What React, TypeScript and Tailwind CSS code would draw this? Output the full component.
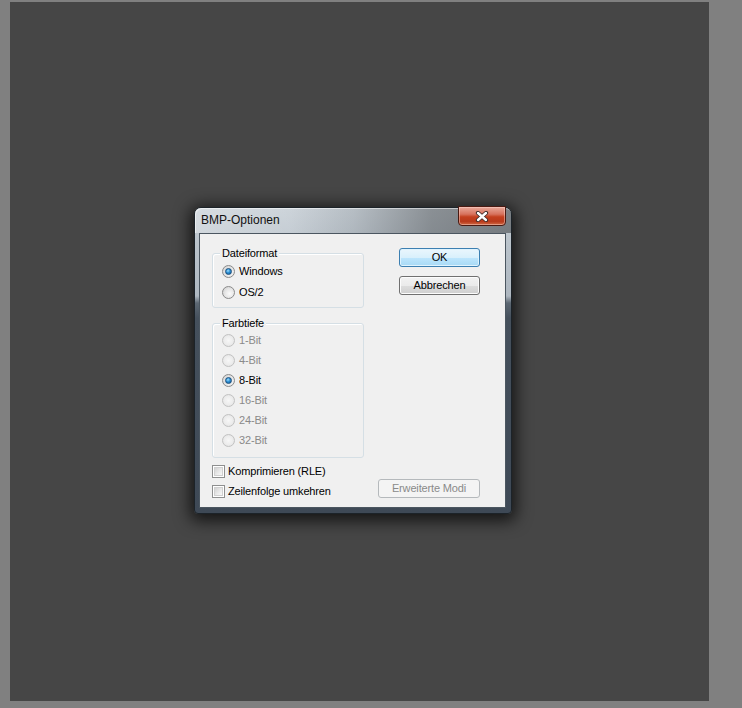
import React from "react";

function Radio({ label, checked = false, disabled = false, h = "h-[20px]" }: { label: string; checked?: boolean; disabled?: boolean; h?: string }) {
  return (
    <div className={`flex ${h} items-center gap-[4px]`}>
      <span
        className={`flex h-[13px] w-[13px] shrink-0 items-center justify-center rounded-full border ${
          disabled
            ? "border-[#c2c2c2] bg-[radial-gradient(circle_at_50%_50%,#f7f7f7_0%,#ececec_55%,#dcdcdc_100%)]"
            : "border-[#8b8b8b] bg-[radial-gradient(circle_at_60%_60%,#fbfbfb_0%,#e6e6e6_50%,#c9c9c9_100%)]"
        }`}
      >
        {checked && (
          <span className="h-[7px] w-[7px] rounded-full border border-[#1b4f7d] bg-[radial-gradient(circle_at_40%_35%,#9fe0ff_0%,#2b8ed3_45%,#0f5a96_100%)]" />
        )}
      </span>
      <span className={disabled ? "text-[#8a8a8a]" : "text-black"}>{label}</span>
    </div>
  );
}

function Check({ label }: { label: string }) {
  return (
    <div className="flex h-[20px] items-center gap-[3px]">
      <span className="flex h-[13px] w-[13px] shrink-0 items-center justify-center border border-[#8e8f8f] bg-white">
        <span className="h-[9px] w-[9px] border border-[#d0d0d0] bg-[linear-gradient(135deg,#d3d3d3_0%,#ebebeb_60%,#f8f8f8_100%)]" />
      </span>
      <span className="text-black">{label}</span>
    </div>
  );
}

function Btn({ label, def = false, disabled = false, w = "w-[81px]" }: { label: string; def?: boolean; disabled?: boolean; w?: string }) {
  const cls = disabled
    ? "border-[#b5b9bc] bg-[#f4f4f4] text-[#8a8a8a]"
    : def
    ? "border-[#3c7fb1] bg-[linear-gradient(to_bottom,#eaf6fd_0%,#d9f0fc_50%,#bee6fd_51%,#a7d9f5_100%)] text-black shadow-[inset_0_0_0_1px_#dff3fe]"
    : "border-[#707070] bg-[linear-gradient(to_bottom,#f2f2f2_0%,#ebebeb_50%,#dddddd_51%,#cfcfcf_100%)] text-black shadow-[inset_0_0_0_1px_#fcfcfc]";
  return (
    <div className={`flex h-[19px] ${w} items-center justify-center rounded-[3px] border ${cls}`}>
      {label}
    </div>
  );
}

function Group({ title, h, children, className = "" }: { title: string; h: string; children: React.ReactNode; className?: string }) {
  return (
    <div className={`relative w-[152px] ${h} rounded-[3px] border border-[#d5dfe5] shadow-[inset_1px_1px_0_#ffffff] pl-[9px] ${className}`}>
      <span className="absolute left-[7px] top-[-8px] bg-[#f0f0f0] px-[2px] leading-[14px] text-black">{title}</span>
      {children}
    </div>
  );
}

export default function App() {
  return (
    <div className="h-[708px] w-[742px] bg-[#808080] pl-[10px] pt-[2px] font-['Liberation_Sans',Tahoma,Arial,sans-serif] text-[11px] leading-[13px] tracking-[-0.15px]">
      <div className="h-[699px] w-[699px] bg-[#464646] pl-[184px] pt-[205px]">
        <div className="relative flex h-[307px] w-[318px] flex-col rounded-t-[7px] rounded-b-[4px] border border-[#1c2329] bg-[linear-gradient(to_bottom,#c6ced5_0px,#b9c2ca_40px,#aeb7c0_88px,#5d6873_95px,#45505c_110px,#3e4956_100%)] shadow-[0_3px_16px_4px_rgba(0,0,0,0.7)]">
          <div className="flex h-[25px] items-center rounded-t-[6px] bg-[linear-gradient(to_right,rgba(255,255,255,0.3)_0%,rgba(255,255,255,0.12)_30%,rgba(0,0,0,0.08)_50%,rgba(0,0,0,0.3)_75%,rgba(0,0,0,0.38)_100%)] pl-[6px] shadow-[inset_1px_1px_0_rgba(255,255,255,0.5)]">
            <span className="font-['Liberation_Sans',Arial,sans-serif] text-[12px] tracking-normal text-[#111]">BMP-Optionen</span>
          </div>
          <div className="absolute right-[5px] top-[-2px] flex h-[20px] w-[48px] items-center justify-center rounded-b-[4px] border border-[#4a1a12] bg-[linear-gradient(to_bottom,#e9a99a_0%,#d7725d_40%,#c4401f_55%,#b83a1c_80%,#d06a45_100%)] shadow-[inset_0_0_0_1px_rgba(255,220,210,0.45)]">
            <svg width="14" height="11" viewBox="0 0 14 11">
              <path d="M3 2 L11 9 M11 2 L3 9" stroke="#3b2a28" strokeWidth="4.2" strokeLinecap="round" fill="none" />
              <path d="M3 2 L11 9 M11 2 L3 9" stroke="#ffffff" strokeWidth="2.4" strokeLinecap="round" fill="none" />
            </svg>
          </div>
          <div className="ml-[4px] mr-[5px] flex h-[275px] flex-col border border-[#4b5660] bg-[#f0f0f0] pl-[12px] pt-[14px]">
            <div className="flex">
              <div className="mt-[5px] flex flex-col">
                <Group title="Dateiformat" h="h-[55px]" className="pt-[7px]">
                  <Radio label="Windows" checked h="h-[21px]" />
                  <Radio label="OS/2" h="h-[21px]" />
                </Group>
                <Group title="Farbtiefe" h="h-[135px]" className="mt-[15px] pt-[6px]">
                  <Radio label="1-Bit" disabled />
                  <Radio label="4-Bit" disabled />
                  <Radio label="8-Bit" checked />
                  <Radio label="16-Bit" disabled />
                  <Radio label="24-Bit" disabled />
                  <Radio label="32-Bit" disabled />
                </Group>
              </div>
              <div className="ml-[35px] flex flex-col gap-[9px]">
                <Btn label="OK" def />
                <Btn label="Abbrechen" />
              </div>
            </div>
            <div className="mt-[3px] flex items-end">
              <div className="flex w-[152px] flex-col">
                <Check label="Komprimieren (RLE)" />
                <Check label="Zeilenfolge umkehren" />
              </div>
              <div className="mb-[3px] ml-[14px]">
                <Btn label="Erweiterte Modi" disabled w="w-[102px]" />
              </div>
            </div>
          </div>
        </div>
      </div>
    </div>
  );
}
